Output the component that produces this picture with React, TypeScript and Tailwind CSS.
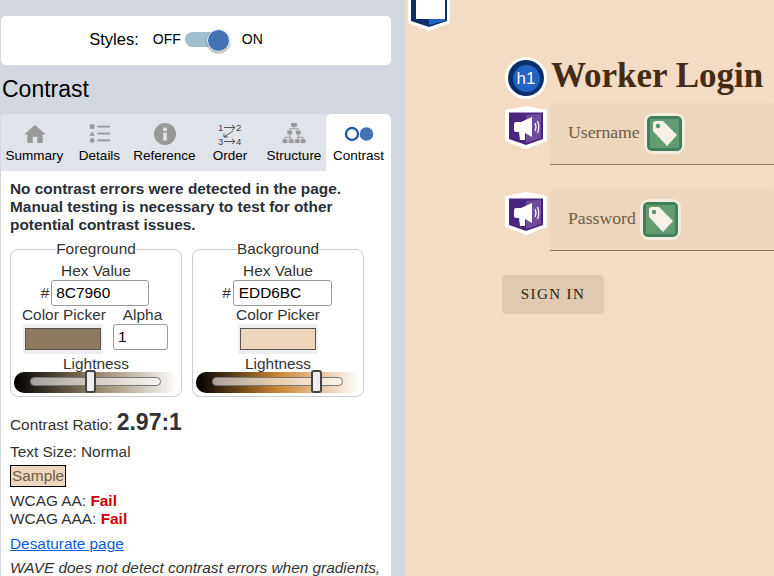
import React from 'react';

const HomeIcon = () => (
  <svg width="22" height="20" viewBox="0 0 24 22" fill="#999">
    <path d="M12 1 L24 11.5 H20.5 V21 H14.5 V14 H9.5 V21 H3.5 V11.5 H0 Z" />
  </svg>
);

const DetailsIcon = () => (
  <svg width="22" height="21" viewBox="0 0 24 22" fill="#999">
    <rect x="1" y="1" width="5" height="5" />
    <path d="M3.5 8.5 L6.5 13.5 H0.5 Z" />
    <circle cx="3.5" cy="18.5" r="2.6" />
    <rect x="9" y="2.5" width="14" height="2" />
    <rect x="9" y="10" width="14" height="2" />
    <rect x="9" y="17.5" width="14" height="2" />
  </svg>
);

const InfoIcon = () => (
  <svg width="22" height="22" viewBox="0 0 22 22">
    <circle cx="11" cy="11" r="11" fill="#999" />
    <rect x="9.2" y="9.5" width="3.6" height="8" fill="#e0e3e9" />
    <rect x="9.2" y="4.5" width="3.6" height="3.4" fill="#e0e3e9" />
  </svg>
);

const OrderIcon = () => (
  <svg width="24" height="24" viewBox="0 0 24 24" fill="none" stroke="#444" strokeWidth="0.9">
    <text x="0" y="9" fontSize="9.5" fill="#444" stroke="none" fontFamily="Liberation Sans">1</text>
    <text x="18" y="9" fontSize="9.5" fill="#444" stroke="none" fontFamily="Liberation Sans">2</text>
    <text x="0" y="23" fontSize="9.5" fill="#444" stroke="none" fontFamily="Liberation Sans">3</text>
    <text x="18" y="23" fontSize="9.5" fill="#444" stroke="none" fontFamily="Liberation Sans">4</text>
    <path d="M6 5.5 H17 M14 3 L17 5.5 L14 8" />
    <path d="M15 9 L6 15 M6 11.5 V15 H10" />
    <path d="M6 19.5 H17 M14 17 L17 19.5 L14 22" />
  </svg>
);

const StructureIcon = () => (
  <svg width="24" height="21" viewBox="0 0 24 22" fill="#999">
    <rect x="9" y="0" width="6" height="4" />
    <rect x="5" y="8" width="5" height="4" />
    <rect x="14" y="8" width="5" height="4" />
    <rect x="0" y="17" width="5" height="4" />
    <rect x="6.5" y="17" width="5" height="4" />
    <rect x="13" y="17" width="5" height="4" />
    <rect x="19" y="17" width="5" height="4" />
    <path d="M12 4 V6 M7.5 8 V6 H16.5 V8 M2.5 17 V15 H9 V17 M7.5 12 V15 M16.5 12 V15 M15.5 17 V15 H21.5 V17" fill="none" stroke="#999" strokeWidth="1" />
  </svg>
);

const ContrastIcon = () => (
  <svg width="30" height="16" viewBox="0 0 30 16">
    <circle cx="8" cy="8" r="6" fill="none" stroke="#1f5aa6" strokeWidth="2.4" />
    <circle cx="22.5" cy="8" r="6.8" fill="#4673b5" />
  </svg>
);

// purple WAVE alert icon
const Shield = ({ className }: { className?: string }) => (
  <svg className={className} width="42" height="43" viewBox="0 0 42 43">
    <path d="M0 4 L21 0 L42 4 V35 L21 43 L0 35 Z" fill="#fff" />
    <path d="M4 6.5 L38 6.5 V33 L21 39 L4 33 Z" fill="#4a2580" />
    <path d="M21 9 L36 7.5 V32 L21 37 Z" fill="#6d4c9a" />
    <path d="M9 18 Q9 16 11 16 H16 L27 11 V31 L20 27 V34 H15 L14 26 H11 Q9 26 9 24 Z" fill="#fff" />
    <path d="M30 17 Q32 21 30 25 M32.5 15 Q35 21 32.5 27" fill="none" stroke="#fff" strokeWidth="1.2" />
  </svg>
);

// structure icon at the very top, cut off by the window
const TopShield = ({ className }: { className?: string }) => (
  <svg className={className} width="42" height="43" viewBox="0 0 42 43">
    <path d="M0 4 L21 0 L42 4 V35 L21 43 L0 35 Z" fill="#fff" />
    <path d="M3 6 L39 6 V33 L21 39 L3 33 Z" fill="#0c2f6b" />
    <path d="M21 31 H37 V33 L21 37 Z" fill="#2264c4" />
    <rect x="8" y="8" width="29" height="23" fill="#fff" />
  </svg>
);

const H1Badge = () => (
  <div className="w-[42px] h-[42px] shrink-0 rounded-full bg-white flex items-center justify-center">
    <div className="w-[36px] h-[36px] rounded-full bg-[#0c2f6b] flex items-center justify-center">
      <div className="w-[27px] h-[27px] rounded-full bg-[#2264c4] flex items-center justify-center text-white text-[17px] leading-none">
        h1
      </div>
    </div>
  </div>
);

const TagBadge = () => (
  <div className="w-[41px] h-[41px] shrink-0 rounded-[9px] bg-[#f5ece0] flex items-center justify-center">
    <svg width="35" height="35" viewBox="0 0 35 35">
      <rect x="0" y="0" width="35" height="35" rx="5" fill="#3f8058" />
      <rect x="3" y="3" width="29" height="29" fill="#649c72" />
      <path d="M6 8 Q6 5 9 5 H16 L30 19 L20 30 L6 15 Z" fill="#f7f0e6" />
      <circle cx="11" cy="10" r="2.2" fill="#4f9669" />
    </svg>
  </div>
);

const Slider = ({ gradient, thumb }: { gradient: string; thumb: string }) => (
  <div className="relative h-[21px] mx-[3px] rounded-[10px]" style={{ background: gradient }}>
    <div className="absolute left-[16px] top-[5px] w-[131px] h-[9px] rounded-[5px] border border-[#777] bg-white/60" />
    <div
      className="absolute top-[-2px] w-[11px] h-[23px] rounded-[3px] border-2 border-[#444] bg-[#eee]"
      style={{ left: thumb }}
    />
  </div>
);

const tabs = [
  { label: 'Summary', icon: <HomeIcon />, width: 'w-[67px]' },
  { label: 'Details', icon: <DetailsIcon />, width: 'w-[63px]' },
  { label: 'Reference', icon: <InfoIcon />, width: 'w-[67px]' },
  { label: 'Order', icon: <OrderIcon />, width: 'w-[64px]' },
  { label: 'Structure', icon: <StructureIcon />, width: 'w-[64px]' },
];

const Field = ({ label }: { label: string }) => (
  <div className="flex items-start gap-[3px]">
    <Shield className="shrink-0 mt-[3px]" />
    <div className="w-[300px] h-[62px] rounded-t-[4px] bg-[#edd6bc] border-b border-[#8c7960] pl-[18px] pt-[10px] flex items-start">
      <span className="text-[#6f5c44] text-[17.7px] leading-[38px] font-['Liberation_Serif']">{label}</span>
      <div className="ml-[4px]">
        <TagBadge />
      </div>
    </div>
  </div>
);

export default function App() {
  return (
    <div className="flex w-[774px] h-[576px] overflow-hidden font-['Liberation_Sans',sans-serif]">
      {/* WAVE sidebar */}
      <aside className="w-[405px] h-full shrink-0 overflow-hidden bg-[#d3d8e0] pt-[16px] pl-[1px] pr-[14px]">
        <div className="h-[49px] rounded-[5px] bg-white flex items-center justify-center pr-[40px] pb-[2px] text-black">
          <span className="text-[16.5px] mr-[14px]">Styles:</span>
          <span className="text-[14px]">OFF</span>
          <span className="relative w-[45px] h-[22px] ml-[4px] mr-[12px] flex items-center">
            <span className="w-[36px] h-[15px] rounded-full bg-[#9fc0cc]" />
            <span className="absolute right-0 top-[0px] w-[23px] h-[23px] rounded-full bg-[#4673b5] border border-white shadow-[0_1px_2px_rgba(0,0,0,0.4)]" />
          </span>
          <span className="text-[14px]">ON</span>
        </div>

        <h2 className="text-[23px] leading-[28px] text-black mt-[10px] ml-[1px]">Contrast</h2>

        <div className="mt-[11px] rounded-t-[5px] bg-white overflow-hidden">
          <div className="flex h-[57px] bg-[#e0e3e9]">
            {tabs.map(tab => (
              <div key={tab.label} className={`${tab.width} flex flex-col items-center pt-[7px] text-[13.5px] text-black`}>
                <div className="h-[25px] flex items-center">{tab.icon}</div>
                <span className="mt-[2px] leading-[16px]">{tab.label}</span>
              </div>
            ))}
            <div className="flex-1 rounded-t-[6px] bg-white flex flex-col items-center pt-[7px] text-[13.5px] text-black">
              <div className="h-[25px] flex items-center"><ContrastIcon /></div>
              <span className="mt-[2px] leading-[16px]">Contrast</span>
            </div>
          </div>

          <div className="pl-[9px] pr-[10px] pt-[9px] text-[#333] text-[15.4px]">
            <p className="font-bold leading-[18px] text-[#2b2f36] w-[345px]">
              No contrast errors were detected in the page. Manual testing is necessary to test for other potential contrast issues.
            </p>

            <div className="flex gap-[10px] mt-[7px] w-[354px]">
              <fieldset className="w-[172px] h-[156px] border border-[#ccc] rounded-[8px] text-center">
                <legend className="mx-auto leading-[16px] px-0">Foreground</legend>
                <div className="leading-[17px] mt-[5px]">Hex Value</div>
                <div className="flex items-center justify-center mt-[1px] ml-[-2px]">
                  <span className="mr-[2px]">#</span>
                  <div className="w-[98px] h-[26px] border border-[#999] rounded-[3px] bg-white text-black text-left pl-[4px] leading-[23px]">8C7960</div>
                </div>
                <div className="flex pl-[11px] leading-[17px]">
                  <span>Color Picker</span>
                  <span className="ml-[17px]">Alpha</span>
                </div>
                <div className="flex mt-[1px] pl-[12px] items-start">
                  <div className="w-[80px] h-[30px] bg-[#efefef] rounded-[2px] px-[2px] py-[4px] flex">
                    <div className="w-full h-full bg-[#8c7960] border border-[#555]" />
                  </div>
                  <div className="ml-[10px] w-[55px] h-[26px] border border-[#999] rounded-[3px] bg-white text-black text-left pl-[4px] leading-[24px]">1</div>
                </div>
                <div className="leading-[17px] mt-[1px] h-[17px]">Lightness</div>
                <Slider
                  gradient="linear-gradient(to right, #000, hsl(34,19%,50%) 50%, #fff)"
                  thumb="71px"
                />
              </fieldset>

              <fieldset className="w-[172px] h-[156px] border border-[#ccc] rounded-[8px] text-center">
                <legend className="mx-auto leading-[16px] px-0">Background</legend>
                <div className="leading-[17px] mt-[5px]">Hex Value</div>
                <div className="flex items-center justify-center mt-[1px] ml-[-2px]">
                  <span className="mr-[2px]">#</span>
                  <div className="w-[99px] h-[26px] border border-[#999] rounded-[3px] bg-white text-black text-left pl-[5px] leading-[23px]">EDD6BC</div>
                </div>
                <div className="leading-[17px]">Color Picker</div>
                <div className="flex mt-[1px] justify-center">
                  <div className="w-[80px] h-[30px] bg-[#efefef] rounded-[2px] px-[2px] py-[4px] flex">
                    <div className="w-full h-full bg-[#edd6bc] border border-[#555]" />
                  </div>
                </div>
                <div className="leading-[17px] mt-[1px] h-[17px]">Lightness</div>
                <Slider
                  gradient="linear-gradient(to right, #000, hsl(32,60%,50%) 50%, #fff)"
                  thumb="115px"
                />
              </fieldset>
            </div>

            <div className="mt-[12px] flex items-baseline">
              Contrast Ratio:<span className="ml-[4px] text-[23px] font-bold leading-[26px]">2.97:1</span>
            </div>
            <div className="mt-[7px] leading-[18px]">Text Size: Normal</div>
            <div className="mt-[4px] w-fit border border-black bg-[#edd6bc] text-[#6e5f4a] leading-[20px] px-[1px]">Sample</div>
            <div className="mt-[5px] leading-[18px]">WCAG AA: <strong className="text-[#c00]">Fail</strong></div>
            <div className="leading-[18px]">WCAG AAA: <strong className="text-[#c00]">Fail</strong></div>
            <a className="block mt-[7px] leading-[18px] text-[#0a5fd8] underline">Desaturate page</a>
            <p className="mt-[6px] italic leading-[18px] whitespace-nowrap">WAVE does not detect contrast errors when gradients,</p>
          </div>
        </div>
      </aside>

      {/* Page being evaluated */}
      <main className="flex-1 min-w-0 h-full overflow-hidden bg-[#f4dcc4]">
        <TopShield className="mt-[-12px] ml-[3px]" />
        <div className="pl-[97px] mt-[25px]">
          <div className="flex items-center pl-[3px] h-[44px]">
            <H1Badge />
            <h1 className="ml-[4px] mb-[5px] text-[35px] leading-[44px] font-bold text-[#442c14] font-['Liberation_Serif'] whitespace-nowrap">Worker Login</h1>
          </div>
          <div className="mt-[3px] pl-[3px]"><Field label="Username" /></div>
          <div className="mt-[24px] pl-[3px]"><Field label="Password" /></div>
          <button className="mt-[24px] w-[102px] h-[39px] rounded-[4px] bg-[#e0c9b0] text-[#2e1f10] text-[15px] tracking-[1.4px] font-['Liberation_Serif']">SIGN IN</button>
        </div>
      </main>
    </div>
  );
}
